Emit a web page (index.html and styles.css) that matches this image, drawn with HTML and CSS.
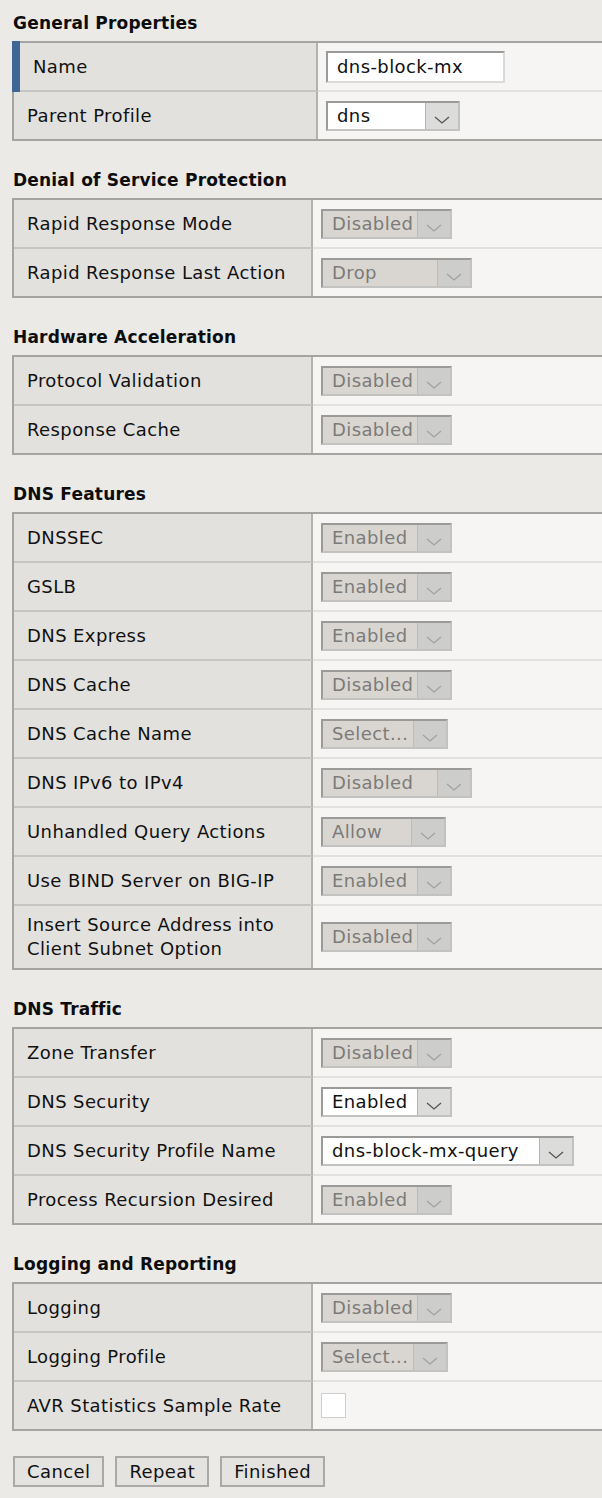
FILE: index.html
```html
<!DOCTYPE html>
<html lang="en">
<head>
<meta charset="utf-8">
<title>DNS Profile</title>
<link rel="stylesheet" href="styles.css">
</head>
<body>
<div class="page">

  <section class="section">
    <h2 class="section-title">General Properties</h2>
    <div class="panel panel-wide">
      <div class="row is-focused">
        <div class="label">Name</div>
        <div class="value"><div class="text-input">dns-block-mx</div></div>
      </div>
      <div class="row">
        <div class="label">Parent Profile</div>
        <div class="value">
          <div class="select w134"><span class="select-value">dns</span><span class="select-arrow"><svg width="16" height="8" viewBox="0 0 16 8"><polyline points="1,1 8,7 15,1"/></svg></span></div>
        </div>
      </div>
    </div>
  </section>

  <section class="section">
    <h2 class="section-title">Denial of Service Protection</h2>
    <div class="panel">
      <div class="row">
        <div class="label">Rapid Response Mode</div>
        <div class="value"><div class="select is-disabled w131"><span class="select-value">Disabled</span><span class="select-arrow"><svg width="16" height="8" viewBox="0 0 16 8"><polyline points="1,1 8,7 15,1"/></svg></span></div></div>
      </div>
      <div class="row">
        <div class="label">Rapid Response Last Action</div>
        <div class="value"><div class="select is-disabled w151"><span class="select-value">Drop</span><span class="select-arrow"><svg width="16" height="8" viewBox="0 0 16 8"><polyline points="1,1 8,7 15,1"/></svg></span></div></div>
      </div>
    </div>
  </section>

  <section class="section">
    <h2 class="section-title">Hardware Acceleration</h2>
    <div class="panel">
      <div class="row">
        <div class="label">Protocol Validation</div>
        <div class="value"><div class="select is-disabled w131"><span class="select-value">Disabled</span><span class="select-arrow"><svg width="16" height="8" viewBox="0 0 16 8"><polyline points="1,1 8,7 15,1"/></svg></span></div></div>
      </div>
      <div class="row">
        <div class="label">Response Cache</div>
        <div class="value"><div class="select is-disabled w131"><span class="select-value">Disabled</span><span class="select-arrow"><svg width="16" height="8" viewBox="0 0 16 8"><polyline points="1,1 8,7 15,1"/></svg></span></div></div>
      </div>
    </div>
  </section>

  <section class="section">
    <h2 class="section-title">DNS Features</h2>
    <div class="panel">
      <div class="row">
        <div class="label">DNSSEC</div>
        <div class="value"><div class="select is-disabled w131"><span class="select-value">Enabled</span><span class="select-arrow"><svg width="16" height="8" viewBox="0 0 16 8"><polyline points="1,1 8,7 15,1"/></svg></span></div></div>
      </div>
      <div class="row">
        <div class="label">GSLB</div>
        <div class="value"><div class="select is-disabled w131"><span class="select-value">Enabled</span><span class="select-arrow"><svg width="16" height="8" viewBox="0 0 16 8"><polyline points="1,1 8,7 15,1"/></svg></span></div></div>
      </div>
      <div class="row">
        <div class="label">DNS Express</div>
        <div class="value"><div class="select is-disabled w131"><span class="select-value">Enabled</span><span class="select-arrow"><svg width="16" height="8" viewBox="0 0 16 8"><polyline points="1,1 8,7 15,1"/></svg></span></div></div>
      </div>
      <div class="row">
        <div class="label">DNS Cache</div>
        <div class="value"><div class="select is-disabled w131"><span class="select-value">Disabled</span><span class="select-arrow"><svg width="16" height="8" viewBox="0 0 16 8"><polyline points="1,1 8,7 15,1"/></svg></span></div></div>
      </div>
      <div class="row">
        <div class="label">DNS Cache Name</div>
        <div class="value"><div class="select is-disabled w127"><span class="select-value">Select...</span><span class="select-arrow"><svg width="16" height="8" viewBox="0 0 16 8"><polyline points="1,1 8,7 15,1"/></svg></span></div></div>
      </div>
      <div class="row">
        <div class="label">DNS IPv6 to IPv4</div>
        <div class="value"><div class="select is-disabled w151"><span class="select-value">Disabled</span><span class="select-arrow"><svg width="16" height="8" viewBox="0 0 16 8"><polyline points="1,1 8,7 15,1"/></svg></span></div></div>
      </div>
      <div class="row">
        <div class="label">Unhandled Query Actions</div>
        <div class="value"><div class="select is-disabled w125"><span class="select-value">Allow</span><span class="select-arrow"><svg width="16" height="8" viewBox="0 0 16 8"><polyline points="1,1 8,7 15,1"/></svg></span></div></div>
      </div>
      <div class="row">
        <div class="label">Use BIND Server on BIG-IP</div>
        <div class="value"><div class="select is-disabled w131"><span class="select-value">Enabled</span><span class="select-arrow"><svg width="16" height="8" viewBox="0 0 16 8"><polyline points="1,1 8,7 15,1"/></svg></span></div></div>
      </div>
      <div class="row row-tall">
        <div class="label">Insert Source Address into<br>Client Subnet Option</div>
        <div class="value"><div class="select is-disabled w131"><span class="select-value">Disabled</span><span class="select-arrow"><svg width="16" height="8" viewBox="0 0 16 8"><polyline points="1,1 8,7 15,1"/></svg></span></div></div>
      </div>
    </div>
  </section>

  <section class="section">
    <h2 class="section-title">DNS Traffic</h2>
    <div class="panel">
      <div class="row">
        <div class="label">Zone Transfer</div>
        <div class="value"><div class="select is-disabled w131"><span class="select-value">Disabled</span><span class="select-arrow"><svg width="16" height="8" viewBox="0 0 16 8"><polyline points="1,1 8,7 15,1"/></svg></span></div></div>
      </div>
      <div class="row">
        <div class="label">DNS Security</div>
        <div class="value"><div class="select w131"><span class="select-value">Enabled</span><span class="select-arrow"><svg width="16" height="8" viewBox="0 0 16 8"><polyline points="1,1 8,7 15,1"/></svg></span></div></div>
      </div>
      <div class="row">
        <div class="label">DNS Security Profile Name</div>
        <div class="value"><div class="select w253"><span class="select-value">dns-block-mx-query</span><span class="select-arrow"><svg width="16" height="8" viewBox="0 0 16 8"><polyline points="1,1 8,7 15,1"/></svg></span></div></div>
      </div>
      <div class="row">
        <div class="label">Process Recursion Desired</div>
        <div class="value"><div class="select is-disabled w131"><span class="select-value">Enabled</span><span class="select-arrow"><svg width="16" height="8" viewBox="0 0 16 8"><polyline points="1,1 8,7 15,1"/></svg></span></div></div>
      </div>
    </div>
  </section>

  <section class="section">
    <h2 class="section-title">Logging and Reporting</h2>
    <div class="panel">
      <div class="row">
        <div class="label">Logging</div>
        <div class="value"><div class="select is-disabled w131"><span class="select-value">Disabled</span><span class="select-arrow"><svg width="16" height="8" viewBox="0 0 16 8"><polyline points="1,1 8,7 15,1"/></svg></span></div></div>
      </div>
      <div class="row">
        <div class="label">Logging Profile</div>
        <div class="value"><div class="select is-disabled w127"><span class="select-value">Select...</span><span class="select-arrow"><svg width="16" height="8" viewBox="0 0 16 8"><polyline points="1,1 8,7 15,1"/></svg></span></div></div>
      </div>
      <div class="row">
        <div class="label">AVR Statistics Sample Rate</div>
        <div class="value"><div class="checkbox"></div></div>
      </div>
    </div>
  </section>

  <div class="actions">
    <button class="btn" type="button">Cancel</button>
    <button class="btn" type="button">Repeat</button>
    <button class="btn" type="button">Finished</button>
  </div>

</div>
</body>
</html>
```

FILE: styles.css
```css
html, body {
  margin: 0;
  padding: 0;
  background: #ebeae6;
}

body {
  font-family: "DejaVu Sans", "Liberation Sans", sans-serif;
  font-size: 18px;
  letter-spacing: 0.4px;
  color: #111;
  overflow: hidden;
}

.page {
  padding: 11px 0 0 12px;
  overflow: hidden;
}

.section {
  margin-bottom: 27px;
}

.section-title {
  margin: 0 0 6px 1px;
  height: 24px;
  line-height: 24px;
  font-size: 17px;
  font-weight: bold;
  letter-spacing: 0.2px;
  color: #0d0d0d;
}

.panel {
  width: 640px;
  border: 2px solid #a4a4a2;
  background: #f6f5f3;
}

.row {
  position: relative;
  display: flex;
}

.label {
  box-sizing: border-box;
  width: 299px;
  height: 49px;
  padding-left: 13px;
  display: flex;
  align-items: center;
  background: #e2e1de;
  border-right: 2px solid #b3b2af;
  border-bottom: 2px solid #c6c5c2;
  line-height: 24px;
}

.panel-wide .label {
  width: 304px;
}

.value {
  box-sizing: border-box;
  flex: 1;
  height: 49px;
  padding-left: 8px;
  display: flex;
  align-items: center;
  border-bottom: 2px solid #e2e1de;
}

.row:last-child .label,
.row:last-child .value {
  border-bottom: none;
  height: 47px;
}

.row.row-tall .label,
.row.row-tall .value {
  height: 64px;
}

.row.row-tall:last-child .label,
.row.row-tall:last-child .value {
  height: 62px;
}

.is-focused .label {
  padding-left: 19px;
}

.is-focused::before {
  content: "";
  position: absolute;
  left: -2px;
  top: -2px;
  bottom: 0;
  width: 8px;
  background: #3c6797;
}

.text-input {
  box-sizing: border-box;
  width: 179px;
  height: 32px;
  padding-left: 9px;
  line-height: 28px;
  background: #fff;
  border: 2px solid;
  border-color: #9a9a9a #dadada #dadada #9a9a9a;
  color: #111;
}

.select {
  box-sizing: border-box;
  display: flex;
  height: 30px;
  background: #fff;
  border: 2px solid;
  border-color: #9a9a98 #c2c2c0 #c2c2c0 #9a9a98;
}

.select-value {
  flex: 1;
  padding-left: 9px;
  line-height: 26px;
  color: #111;
  white-space: nowrap;
  overflow: hidden;
}

.select-arrow {
  box-sizing: border-box;
  width: 33px;
  display: flex;
  align-items: flex-end;
  justify-content: center;
  padding-bottom: 5px;
  background: #dcdcdb;
  border-left: 1px solid #b4b4b2;
}

.select-arrow svg {
  display: block;
}

.select-arrow polyline {
  fill: none;
  stroke: #555;
  stroke-width: 1.3;
}

.select.is-disabled {
  background: #d9d6d1;
}

.select.is-disabled .select-value {
  color: #7c7b79;
}

.select.is-disabled .select-arrow {
  background: #cdcdcb;
  border-left-color: #bcbcba;
}

.select.is-disabled .select-arrow polyline {
  stroke: #a2a2a0;
}

.w125 { width: 125px; }
.w127 { width: 127px; }
.w131 { width: 131px; }
.w134 { width: 134px; }
.w151 { width: 151px; }
.w253 { width: 253px; }

.checkbox {
  box-sizing: border-box;
  width: 25px;
  height: 25px;
  background: #fff;
  border: 1px solid #cfcfcd;
}

.actions {
  display: flex;
  gap: 11px;
  margin-top: -2px;
  padding-left: 1px;
}

.btn {
  box-sizing: border-box;
  height: 31px;
  padding: 0 12px;
  font-family: "DejaVu Sans", "Liberation Sans", sans-serif;
  font-size: 18px;
  letter-spacing: 0.4px;
  color: #111;
  background: #e4e3e0;
  border: 2px solid #a9a9a7;
  border-radius: 0;
}
```
